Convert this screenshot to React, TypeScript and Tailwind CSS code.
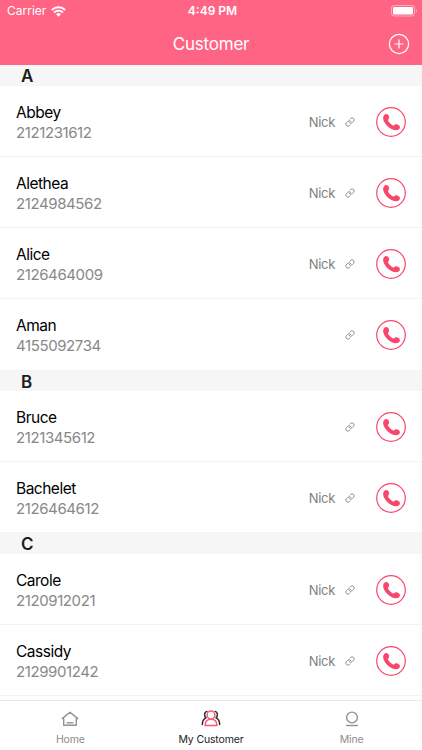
import { useState } from 'react';
import { Link } from 'lucide-react';

interface Customer {
  name: string;
  phone: string;
  owner?: string;
}

interface Section {
  letter: string;
  customers: Customer[];
}

const sections: Section[] = [
  {
    letter: 'A',
    customers: [
      { name: 'Abbey', phone: '2121231612', owner: 'Nick' },
      { name: 'Alethea', phone: '2124984562', owner: 'Nick' },
      { name: 'Alice', phone: '2126464009', owner: 'Nick' },
      { name: 'Aman', phone: '4155092734' },
    ],
  },
  {
    letter: 'B',
    customers: [
      { name: 'Bruce', phone: '2121345612' },
      { name: 'Bachelet', phone: '2126464612', owner: 'Nick' },
    ],
  },
  {
    letter: 'C',
    customers: [
      { name: 'Carole', phone: '2120912021', owner: 'Nick' },
      { name: 'Cassidy', phone: '2129901242', owner: 'Nick' },
    ],
  },
];

function WifiIcon() {
  return (
    <svg width="15" height="11" viewBox="0 0 15 11" fill="none" stroke="white" strokeWidth="1.9">
      <path d="M0.8 4a9.6 9.6 0 0 1 13.4 0" />
      <path d="M3.1 6.5a6.2 6.2 0 0 1 8.8 0" />
      <path d="M7.5 10.8 5.1 8.3a3.4 3.4 0 0 1 4.8 0z" fill="white" stroke="none" />
    </svg>
  );
}

function BatteryIcon() {
  return (
    <svg width="26" height="12" viewBox="0 0 26 12" fill="none">
      <rect x="0.5" y="0.5" width="23" height="10.5" rx="2.5" stroke="white" strokeOpacity="0.45" />
      <rect x="2" y="2" width="20" height="7.5" rx="1.2" fill="white" />
      <path d="M24.8 4v3.6c.8-.3 1.1-1 1.1-1.8s-.3-1.5-1.1-1.8z" fill="white" fillOpacity="0.45" />
    </svg>
  );
}

function AddIcon() {
  return (
    <svg width="22" height="22" viewBox="0 0 22 22" fill="none" stroke="white" strokeWidth="1.2">
      <circle cx="11" cy="11" r="9.6" />
      <path d="M11 6.6v8.8M6.6 11h8.8" />
    </svg>
  );
}

function CallIcon() {
  return (
    <svg width="30" height="30" viewBox="0 0 30 30" fill="none">
      <circle cx="15" cy="15" r="14.3" stroke="#f9476c" strokeWidth="1.2" />
      <path
        d="M8 8.2C9 7 11 6.6 12 7.8c1.2 1.4 1.6 3.2.6 4.2-.8.9-.8 1.5 0 2.6 1.2 1.6 2.6 2.9 4 3.6 1 .5 1.5.2 2.3-.5 1.1-.8 3.1-.1 4.4 1 1 .9.8 2.6-.3 3.5-2.5 2-7.5.7-11.2-2.8C8 15.8 5.8 11 8 8.2z"
        fill="#f9476c"
      />
    </svg>
  );
}

function HomeIcon() {
  return (
    <svg width="18" height="17" viewBox="0 0 18 17" fill="none" stroke="#929292" strokeWidth="1.4" strokeLinejoin="round">
      <path d="M1.2 8.6 9 2.2l7.8 6.4h-1.5v6.6H2.7V8.6z" />
      <path d="M5.6 12.8h6.8" />
    </svg>
  );
}

function CustomersIcon() {
  return (
    <svg width="20" height="17" viewBox="0 0 20 17" fill="none" strokeWidth="1.5" strokeLinecap="round">
      <path
        d="M6 1.4c-1.5.4-2.4 1.6-2.4 3.2 0 1.4.5 2.5 1.2 3.2C2.5 9 1.4 11 1.3 14.4M14 1.4c1.5.4 2.4 1.6 2.4 3.2 0 1.4-.5 2.5-1.2 3.2 2.3 1.2 3.4 3.2 3.5 6.6"
        stroke="#302c2e"
      />
      <path
        d="M4.1 15.4c0-4 2.2-6.2 5.9-6.2s5.9 2.2 5.9 6.2z"
        fill="white"
        stroke="#f9577a"
        strokeLinejoin="round"
      />
      <circle cx="10" cy="5" r="3.9" fill="white" stroke="#f9577a" />
    </svg>
  );
}

function MineIcon() {
  return (
    <svg width="14" height="17" viewBox="0 0 14 17" fill="none" stroke="#929292" strokeWidth="1.4">
      <circle cx="7" cy="7.5" r="5.4" />
      <path d="M1 15.5h12" />
    </svg>
  );
}

const tabs = [
  { id: 'home', label: 'Home', icon: HomeIcon },
  { id: 'customer', label: 'My Customer', icon: CustomersIcon },
  { id: 'mine', label: 'Mine', icon: MineIcon },
];

function CustomerRow({ customer }: { customer: Customer }) {
  return (
    <li className="flex h-[71.2px] items-center border-b border-[#f3f3f3] px-4 pt-[2px]">
      <div className="flex-1 pt-[2px]">
        <p className="text-[15.5px] leading-5 tracking-[-0.5px] text-black">{customer.name}</p>
        <p className="text-[15px] leading-5 tracking-[-0.4px] text-[#888]">{customer.phone}</p>
      </div>
      {customer.owner && (
        <span className="mr-[10px] pt-px text-[13px] tracking-[-0.3px] text-[#808080]">{customer.owner}</span>
      )}
      <Link size={10} color="#7d7d7d" strokeWidth={2.1} />
      <button className="ml-[21px]" aria-label={`Call ${customer.name}`}>
        <CallIcon />
      </button>
    </li>
  );
}

export default function App() {
  const [activeTab, setActiveTab] = useState('customer');

  return (
    <div className="flex h-[750px] w-[422px] flex-col overflow-hidden bg-white font-['Inter',sans-serif]">
      {/* Header */}
      <header className="h-[65.3px] shrink-0 bg-[#ff6485] text-white">
        <div className="grid h-[22px] grid-cols-3 items-center pl-[7px] pr-[5px] text-xs">
          <div className="flex items-center gap-[5px]">
            <span>Carrier</span>
            <WifiIcon />
          </div>
          <span className="pl-px text-center font-semibold">4:49 PM</span>
          <div className="flex justify-end">
            <BatteryIcon />
          </div>
        </div>
        <div className="grid h-[43px] grid-cols-3 items-center px-3">
          <h1 className="col-start-2 pt-0.5 text-center text-[17px] tracking-[-0.2px]">Customer</h1>
          <button className="justify-self-end" aria-label="Add customer">
            <AddIcon />
          </button>
        </div>
      </header>

      {/* Customer list */}
      <main className="min-h-0 flex-1 overflow-hidden">
        {sections.map((section) => (
          <section key={section.letter}>
            <h2 className="h-[20.5px] bg-[#f6f6f6] pl-[21px] text-[17px] font-semibold leading-[22px] text-[#1c1c1c]">
              {section.letter}
            </h2>
            <ul>
              {section.customers.map((c) => (
                <CustomerRow key={c.phone} customer={c} />
              ))}
            </ul>
          </section>
        ))}
      </main>

      {/* Tab bar */}
      <nav className="grid h-[50px] shrink-0 grid-cols-3 border-t border-[#e9e9e9]">
        {tabs.map(({ id, label, icon: Icon }) => (
          <button key={id} onClick={() => setActiveTab(id)} className="flex flex-col items-center pt-[9px]">
            <Icon />
            <span
              className={`mt-[5px] text-[10.5px] leading-4 tracking-[-0.15px] ${
                activeTab === id ? 'text-[#1c1c1c]' : 'text-[#8c8c8c]'
              }`}
            >
              {label}
            </span>
          </button>
        ))}
      </nav>
    </div>
  );
}
